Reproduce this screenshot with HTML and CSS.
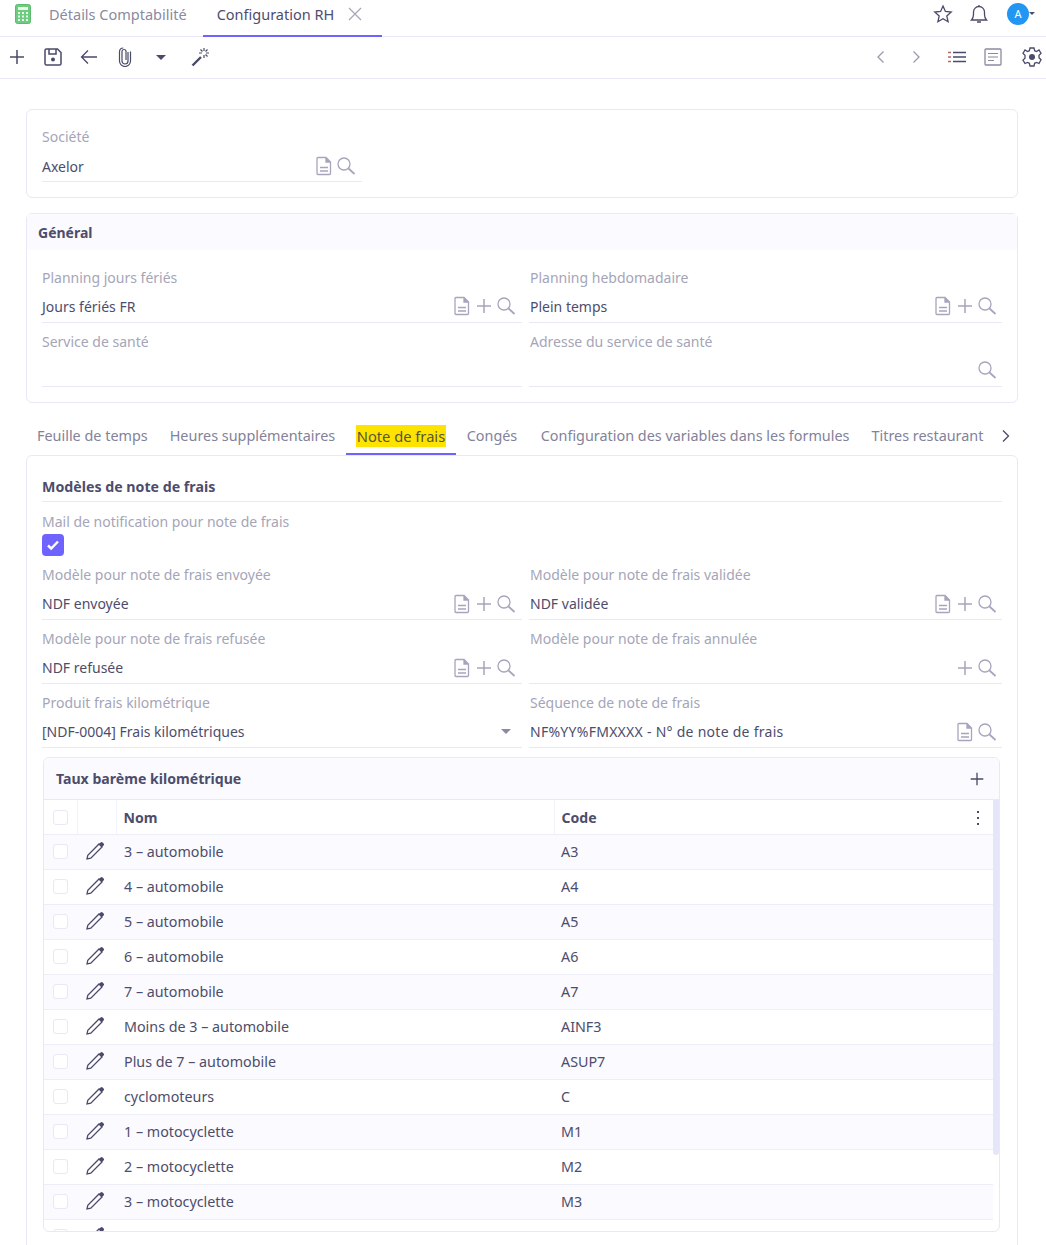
FILE: index.html
```html
<!DOCTYPE html>
<html lang="fr">
<head>
    <meta charset="UTF-8">
    <title>Configuration RH</title>
    <link rel="stylesheet" href="styles.css">
</head>
<body>
    <svg class="sprite" aria-hidden="true">
        <symbol id="i-doc" viewBox="0 0 20 20"><path d="M4 1.500h8l4.500 4.500v11.500a1 1 0 0 1-1 1H4a1 1 0 0 1-1-1v-15a1 1 0 0 1 1-1zM12 1.500V6h4.500M6 11.500h8M6 15h8" fill="none" stroke="currentColor" stroke-width="1.300"/><path d="M12 1.500L16.500 6H12z" fill="currentColor"/></symbol>
        <symbol id="i-plus" viewBox="0 0 20 20"><path d="M10 3v14M3 10h14" fill="none" stroke="currentColor" stroke-width="1.500"/></symbol>
        <symbol id="i-search" viewBox="0 0 20 20"><circle cx="8" cy="8" r="6" fill="none" stroke="currentColor" stroke-width="1.300"/><path d="M12.500 12.500L18.500 18" fill="none" stroke="currentColor" stroke-width="1.700"/></symbol>
        <symbol id="i-pencil" viewBox="0 0 20 20"><path d="M2 18l.8-3.800L14 3l3 3L5.800 17.200z" fill="none" stroke="currentColor" stroke-width="1.300"/><path d="M14 3l1.600-1.600a1.400 1.400 0 0 1 2 0l1 1a1.400 1.400 0 0 1 0 2L17 6z" fill="currentColor"/></symbol>
    </svg>

    <header class="topbar">
        <svg class="app-icon" width="16" height="20" viewBox="0 0 16 20"><rect x="0.500" y="0.500" width="15" height="19" rx="2" fill="#6fcb7f" stroke="#5dbb6d"/><rect x="3" y="3" width="10" height="3" fill="#e9f8ec"/><path d="M3 8h2v2H3zM7 8h2v2H7zM11 8h2v2h-2zM3 11.500h2v2H3zM7 11.500h2v2H7zM11 11.500h2v2h-2zM3 15h2v2H3zM7 15h2v2H7zM11 15h2v2h-2z" fill="#e9f8ec"/></svg>
        <span class="top-tab">Détails Comptabilité</span>
        <span class="top-tab active">Configuration RH
            <svg class="close" width="14" height="14" viewBox="0 0 14 14"><path d="M1 1l12 12M13 1L1 13" fill="none" stroke="currentColor" stroke-width="1.200"/></svg>
        </span>
        <div class="top-right">
            <svg width="20" height="20" viewBox="0 0 20 20"><path d="M10 2l2.400 5.400 5.800.6-4.400 3.900 1.300 5.800L10 14.700l-5.100 3 1.300-5.800L1.800 8l5.800-.6z" fill="none" stroke="#4a4a6a" stroke-width="1.300"/></svg>
            <svg width="20" height="20" viewBox="0 0 20 20"><path d="M2.500 16h15c-1.500-1.500-2-2.500-2-5.500V8a5.500 5.500 0 0 0-11 0v2.500c0 3-.5 4-2 5.500zM10 1v1.500M8 18h4" fill="none" stroke="#4a4a6a" stroke-width="1.300"/></svg>
            <span class="avatar">A</span>
            <span class="avatar-caret"></span>
        </div>
    </header>

    <div class="toolbar">
        <button class="tool"><svg width="20" height="20"><use href="#i-plus"/></svg></button>
        <button class="tool"><svg width="20" height="20" viewBox="0 0 20 20"><path d="M3.500 2h11L18 5.500v11a1.500 1.500 0 0 1-1.500 1.500h-13A1.500 1.500 0 0 1 2 16.500v-13A1.500 1.500 0 0 1 3.500 2zM6 2.500V7h7V2.500" fill="none" stroke="currentColor" stroke-width="1.500"/><circle cx="10" cy="12.500" r="2" fill="currentColor"/></svg></button>
        <button class="tool"><svg width="18" height="18" viewBox="0 0 18 18"><path d="M17 9H2M8 2.500L1.500 9 8 15.500" fill="none" stroke="currentColor" stroke-width="1.300"/></svg></button>
        <button class="tool"><svg width="14" height="20" viewBox="0 0 14 20"><path d="M10 5v9a3 3 0 0 1-6 0V4.500a2 2 0 0 1 4 0V13M12.500 4.500V14a5.500 5.500 0 0 1-11 0V4.500a3.800 3.800 0 0 1 3.800-3.500" fill="none" stroke="currentColor" stroke-width="1.200"/></svg></button>
        <button class="tool"><span class="caret dark"></span></button>
        <button class="tool wand"><svg width="20" height="20" viewBox="0 0 20 20"><path d="M1.500 18.500L10 10" fill="none" stroke="currentColor" stroke-width="2.400"/><path d="M13 1v3M13 8v3M8 6h3M15 6h3M9.500 2.500l2 2M16.500 9.500l-2-2M16.500 2.500l-2 2" fill="none" stroke="currentColor" stroke-width="1.200"/></svg></button>
        <div class="tools-right">
            <svg class="pager" width="14" height="14" viewBox="0 0 14 14"><path d="M9.500 1.500L4 7l5.500 5.500" fill="none" stroke="#9a9ab0" stroke-width="1.300"/></svg>
            <svg class="pager" width="14" height="14" viewBox="0 0 14 14"><path d="M4.500 1.500L10 7l-5.500 5.500" fill="none" stroke="#9a9ab0" stroke-width="1.300"/></svg>
            <svg class="view-list" width="18" height="14" viewBox="0 0 18 14"><path d="M5 2.500h13M5 7h13M5 11.500h13" fill="none" stroke="#4a4a6a" stroke-width="1.300"/><path d="M0 2.500h3M0 7h3M0 11.500h3" fill="none" stroke="#b06a6a" stroke-width="1.300"/></svg>
            <svg class="view-form" width="18" height="18" viewBox="0 0 18 18"><rect x="1" y="1" width="16" height="16" rx="1" fill="none" stroke="#8a8aa0" stroke-width="1.300"/><path d="M4 5.500h10M4 9h10M4 12.500h6" fill="none" stroke="#8a8aa0" stroke-width="1.200"/></svg>
            <svg class="gear" width="20" height="20" viewBox="0 0 20 20"><path d="M8 1h4l.6 2.700 1.900.8L17 3l2 3.400-2 1.900v2.400l2 2L17 16.500l-2.500-1-1.900.8L12 19H8l-.6-2.700-1.900-.8L3 16.500 1 13l2-1.900V8.300L1 6.400 3 3l2.500 1.500 1.900-.8z" fill="none" stroke="#4a4a6a" stroke-width="1.300"/><circle cx="10" cy="10" r="3" fill="#4a4a6a"/></svg>
        </div>
    </div>

    <main class="content">
        <section class="panel panel-top">
            <div class="field short">
                <label>Société</label>
                <div class="value"><span>Axelor</span>
                    <span class="icons"><svg><use href="#i-doc"/></svg><svg><use href="#i-search"/></svg></span>
                </div>
            </div>
        </section>

        <section class="panel panel-general">
            <h2 class="panel-title">Général</h2>
            <div class="fields">
                <div class="field">
                    <label>Planning jours fériés</label>
                    <div class="value"><span>Jours fériés FR</span>
                        <span class="icons"><svg><use href="#i-doc"/></svg><svg><use href="#i-plus"/></svg><svg><use href="#i-search"/></svg></span>
                    </div>
                </div>
                <div class="field">
                    <label>Planning hebdomadaire</label>
                    <div class="value"><span>Plein temps</span>
                        <span class="icons"><svg><use href="#i-doc"/></svg><svg><use href="#i-plus"/></svg><svg><use href="#i-search"/></svg></span>
                    </div>
                </div>
                <div class="field">
                    <label>Service de santé</label>
                    <div class="value"><span></span></div>
                </div>
                <div class="field">
                    <label>Adresse du service de santé</label>
                    <div class="value"><span></span>
                        <span class="icons"><svg><use href="#i-search"/></svg></span>
                    </div>
                </div>
            </div>
        </section>

        <nav class="tabs">
            <a class="tab">Feuille de temps</a>
            <a class="tab">Heures supplémentaires</a>
            <a class="tab active"><mark>Note de frais</mark></a>
            <a class="tab tab-conges">Congés</a>
            <a class="tab">Configuration des variables dans les formules</a>
            <a class="tab">Titres restaurant</a>
            <svg class="tabs-next" width="14" height="14" viewBox="0 0 14 14"><path d="M4 1.500L9.500 7 4 12.500" fill="none" stroke="#4a4a6a" stroke-width="1.300"/></svg>
        </nav>

        <section class="panel panel-tab">
            <h3 class="section-title">Modèles de note de frais</h3>
            <div class="check-field">
                <label>Mail de notification pour note de frais</label>
                <span class="checkbox-on"><svg width="14" height="12" viewBox="0 0 14 12"><path d="M2 6.500l3.200 3L12 2.500" fill="none" stroke="#fff" stroke-width="2.400"/></svg></span>
            </div>
            <div class="fields">
                <div class="field">
                    <label>Modèle pour note de frais envoyée</label>
                    <div class="value"><span>NDF envoyée</span>
                        <span class="icons"><svg><use href="#i-doc"/></svg><svg><use href="#i-plus"/></svg><svg><use href="#i-search"/></svg></span>
                    </div>
                </div>
                <div class="field">
                    <label>Modèle pour note de frais validée</label>
                    <div class="value"><span>NDF validée</span>
                        <span class="icons"><svg><use href="#i-doc"/></svg><svg><use href="#i-plus"/></svg><svg><use href="#i-search"/></svg></span>
                    </div>
                </div>
                <div class="field">
                    <label>Modèle pour note de frais refusée</label>
                    <div class="value"><span>NDF refusée</span>
                        <span class="icons"><svg><use href="#i-doc"/></svg><svg><use href="#i-plus"/></svg><svg><use href="#i-search"/></svg></span>
                    </div>
                </div>
                <div class="field">
                    <label>Modèle pour note de frais annulée</label>
                    <div class="value"><span></span>
                        <span class="icons"><svg><use href="#i-plus"/></svg><svg><use href="#i-search"/></svg></span>
                    </div>
                </div>
                <div class="field">
                    <label>Produit frais kilométrique</label>
                    <div class="value"><span>[NDF-0004] Frais kilométriques</span>
                        <span class="icons"><span class="caret"></span></span>
                    </div>
                </div>
                <div class="field">
                    <label>Séquence de note de frais</label>
                    <div class="value"><span class="seq">NF%YY%FMXXXX - N° de note de frais</span>
                        <span class="icons"><svg><use href="#i-doc"/></svg><svg><use href="#i-search"/></svg></span>
                    </div>
                </div>
            </div>

            <div class="subpanel">
                <div class="subpanel-head">
                    <h4>Taux barème kilométrique</h4>
                    <svg class="subpanel-add" width="18" height="18"><use href="#i-plus"/></svg>
                </div>
                <div class="table-wrap">
                    <table class="grid">
                        <colgroup><col class="col-check"><col class="col-edit"><col class="col-name"><col></colgroup>
                        <thead>
                            <tr><th><span class="box"></span></th><th></th><th>Nom</th><th>Code<span class="dots"><i></i><i></i><i></i></span></th></tr>
                        </thead>
                        <tbody>
                            <tr><td><span class="box"></span></td><td><svg class="edit"><use href="#i-pencil"/></svg></td><td>3 – automobile</td><td>A3</td></tr>
                            <tr><td><span class="box"></span></td><td><svg class="edit"><use href="#i-pencil"/></svg></td><td>4 – automobile</td><td>A4</td></tr>
                            <tr><td><span class="box"></span></td><td><svg class="edit"><use href="#i-pencil"/></svg></td><td>5 – automobile</td><td>A5</td></tr>
                            <tr><td><span class="box"></span></td><td><svg class="edit"><use href="#i-pencil"/></svg></td><td>6 – automobile</td><td>A6</td></tr>
                            <tr><td><span class="box"></span></td><td><svg class="edit"><use href="#i-pencil"/></svg></td><td>7 – automobile</td><td>A7</td></tr>
                            <tr><td><span class="box"></span></td><td><svg class="edit"><use href="#i-pencil"/></svg></td><td>Moins de 3 – automobile</td><td>AINF3</td></tr>
                            <tr><td><span class="box"></span></td><td><svg class="edit"><use href="#i-pencil"/></svg></td><td>Plus de 7 – automobile</td><td>ASUP7</td></tr>
                            <tr><td><span class="box"></span></td><td><svg class="edit"><use href="#i-pencil"/></svg></td><td>cyclomoteurs</td><td>C</td></tr>
                            <tr><td><span class="box"></span></td><td><svg class="edit"><use href="#i-pencil"/></svg></td><td>1 – motocyclette</td><td>M1</td></tr>
                            <tr><td><span class="box"></span></td><td><svg class="edit"><use href="#i-pencil"/></svg></td><td>2 – motocyclette</td><td>M2</td></tr>
                            <tr><td><span class="box"></span></td><td><svg class="edit"><use href="#i-pencil"/></svg></td><td>3 – motocyclette</td><td>M3</td></tr>
                            <tr><td><span class="box"></span></td><td><svg class="edit"><use href="#i-pencil"/></svg></td><td></td><td></td></tr>
                        </tbody>
                    </table>
                    <div class="scroll-thumb"></div>
                </div>
            </div>
        </section>
    </main>
</body>
</html>
```

FILE: styles.css
```css
* {
    box-sizing: border-box;
}

html, body {
    height: 100%;
}

body {
    margin: 0;
    overflow: hidden;
    background-color: #fff;
    color: #4d4d6b;
    font-family: "Noto Sans", sans-serif;
    font-size: 14px;
    line-height: 20px;
}

.sprite {
    display: none;
}

/* top tabs */
.topbar {
    display: flex;
    align-items: center;
    height: 37px;
    padding-left: 15px;
    border-bottom: 1px solid #e8e8f8;
}

.app-icon {
    margin-right: 4px;
    margin-top: -9px;
}

.top-tab {
    display: flex;
    align-items: center;
    height: 37px;
    padding: 0 16px 9px 14px;
    color: #8a8aa2;
    font-size: 14.5px;
}

.top-tab.active {
    width: 179px;
    padding-bottom: 7px;
    color: #4d4d72;
    border-bottom: 2px solid #6f63ff;
}

.close {
    margin-left: 14px;
    color: #a5a5b8;
}

.top-right {
    display: flex;
    align-items: center;
    gap: 16px;
    margin-left: auto;
    padding-bottom: 8px;
    padding-right: 11px;
}

.avatar {
    display: flex;
    align-items: center;
    justify-content: center;
    width: 22px;
    height: 22px;
    margin-left: 2px;
    border-radius: 50%;
    background-color: #2196f3;
    color: #fff;
    font-size: 11px;
}

.avatar-caret {
    margin-left: -16px;
    border: 3px solid transparent;
    border-top-color: #4d4d6b;
    margin-top: 2px;
}

/* toolbar */
.toolbar {
    display: flex;
    align-items: center;
    height: 42px;
    margin-left: -1px;
    padding-bottom: 1px;
    border-bottom: 1px solid #e8e8f8;
}

.tool {
    display: flex;
    align-items: center;
    justify-content: center;
    width: 36px;
    height: 36px;
    padding: 0;
    border: none;
    background: none;
    color: #4a4a6a;
}

.tool.wand {
    margin-left: 4px;
}

.tools-right {
    display: flex;
    align-items: center;
    margin-left: auto;
    padding-right: 4px;
}

.pager {
    margin-right: 21px;
}

.view-list {
    margin-left: 4px;
    margin-right: 18px;
}

.view-form {
    margin-right: 20px;
}

.caret {
    display: inline-block;
    border: 5px solid transparent;
    border-top-color: currentColor;
    border-bottom-width: 0;
}

/* panels */
.content {
    padding: 30px 28px 0 26px;
}

.panel {
    border: 1px solid #e8e8f6;
    border-radius: 6px;
}

.panel-top {
    height: 89px;
    margin-bottom: 15px;
    padding: 17px 15px 0;
}

.panel-top .value {
    padding-top: 6px;
}

.panel-general {
    height: 190px;
    margin-bottom: 22px;
}

.panel-title {
    margin: 0;
    height: 36px;
    padding: 9px 11px;
    background-color: #fafaff;
    font-size: 14px;
    font-weight: 700;
}

.panel-general .fields {
    padding: 18px 15px 0;
}

.fields {
    display: grid;
    grid-template-columns: 480px 473px;
    column-gap: 7px;
}

.panel-tab .fields {
    margin-top: -1px;
}

.field {
    height: 64px;
}

.field.short {
    width: 320px;
}

.field label,
.check-field label {
    display: block;
    height: 20px;
    color: #a5a5b8;
}

.value {
    display: flex;
    align-items: center;
    justify-content: space-between;
    height: 35px;
    padding-top: 4px;
    border-bottom: 1px solid #e8e8f6;
}

.seq {
    letter-spacing: 0.27px;
}

.fields .field:nth-child(even) .value > span:first-child,
.fields .field:nth-child(even) label {
    padding-left: 1px;
}

.icons {
    display: flex;
    align-items: center;
    gap: 2px;
    margin-top: -2px;
    padding-right: 5px;
    color: #a5a5bc;
}

.panel-tab .icons {
    margin-top: -1px;
}

.field:nth-child(odd) .icons {
    padding-right: 6px;
}

.icons svg {
    width: 20px;
    height: 20px;
}

.icons .caret {
    margin-right: 5px;
    color: #8a8aa2;
}

/* tabs */
.tabs {
    display: flex;
    align-items: center;
    height: 30px;
}

.tab {
    display: flex;
    align-items: center;
    height: 30px;
    padding: 0 11px 8px;
    color: #82829a;
    font-size: 14.4px;
    white-space: nowrap;
}

.tab.active {
    padding: 0 9.5px 6px;
    color: #4d4d6b;
    border-bottom: 2px solid #6f63ff;
}

.tab-conges {
    padding-right: 12.5px;
}

.tab mark {
    background-color: #ffe300;
    color: #55553a;
    font-size: 14.7px;
    padding: 1px;
}

.tabs-next {
    margin-left: 5px;
    margin-bottom: 8px;
}

.panel-tab {
    height: 800px;
    border-radius: 6px 6px 0 0;
    padding: 20px 15px 0;
}

.section-title {
    margin: 0;
    height: 26px;
    padding-top: 1px;
    font-size: 14.2px;
    font-weight: 700;
    border-bottom: 1px solid #e8e8f6;
}

.check-field {
    height: 63px;
    padding-top: 10px;
    margin-bottom: 1px;
}

.checkbox-on {
    display: flex;
    align-items: center;
    justify-content: center;
    width: 22px;
    height: 22px;
    margin-top: 2px;
    border-radius: 4px;
    background-color: #6f63ff;
}

/* sub table */
.subpanel {
    width: 957px;
    height: 475px;
    margin-left: 1px;
    border: 1px solid #e8e8f6;
    border-radius: 6px;
    overflow: hidden;
}

.subpanel-head {
    display: flex;
    align-items: center;
    justify-content: space-between;
    height: 42px;
    padding: 0 13px 0 12px;
    background-color: #fafaff;
    border-bottom: 1px solid #e8e8f6;
}

.subpanel-head h4 {
    margin: 0;
    font-size: 14.1px;
    font-weight: 700;
}

.subpanel-add {
    color: #4a4a6a;
}

.table-wrap {
    position: relative;
    height: 431px;
    overflow: hidden;
}

.grid {
    width: 949px;
    table-layout: fixed;
    border-collapse: collapse;
}

.col-check {
    width: 33px;
}

.col-edit {
    width: 39px;
}

.col-name {
    width: 438px;
}

.grid th,
.grid td {
    height: 35px;
    padding: 0 7px;
    border-bottom: 1px solid #eeeef8;
    text-align: left;
    font-size: 14.3px;
    font-weight: 400;
}

.grid th {
    position: relative;
    height: 34px;
    padding-top: 2px;
    font-size: 14.1px;
    font-weight: 700;
    border-right: 1px solid #f3f3fb;
}

.grid td:nth-child(3) {
    padding-left: 8px;
}

.grid th:nth-child(4) {
    border-right: none;
}

.grid th:first-child,
.grid td:first-child {
    padding: 0;
    text-align: center;
}

.grid tbody tr:nth-child(odd) {
    background-color: #fafaff;
}

.box {
    display: inline-block;
    width: 15px;
    height: 15px;
    vertical-align: middle;
    border: 1px solid #e8e8f6;
    border-radius: 3px;
    background-color: #fff;
}

.grid td .box {
    margin-top: -2px;
}

.edit {
    display: block;
    width: 20px;
    height: 20px;
    margin-left: 1px;
    margin-top: -2px;
    color: #4a4a6a;
}

.dots {
    position: absolute;
    right: 14px;
    top: 11px;
    display: flex;
    flex-direction: column;
    gap: 4px;
}

.dots i {
    width: 2px;
    height: 2px;
    background-color: #4a4a6a;
}

.scroll-thumb {
    position: absolute;
    top: 0;
    right: 0;
    width: 6px;
    height: 355px;
    border-radius: 0 0 3px 3px;
    background-color: #e6e6fa;
}
```
